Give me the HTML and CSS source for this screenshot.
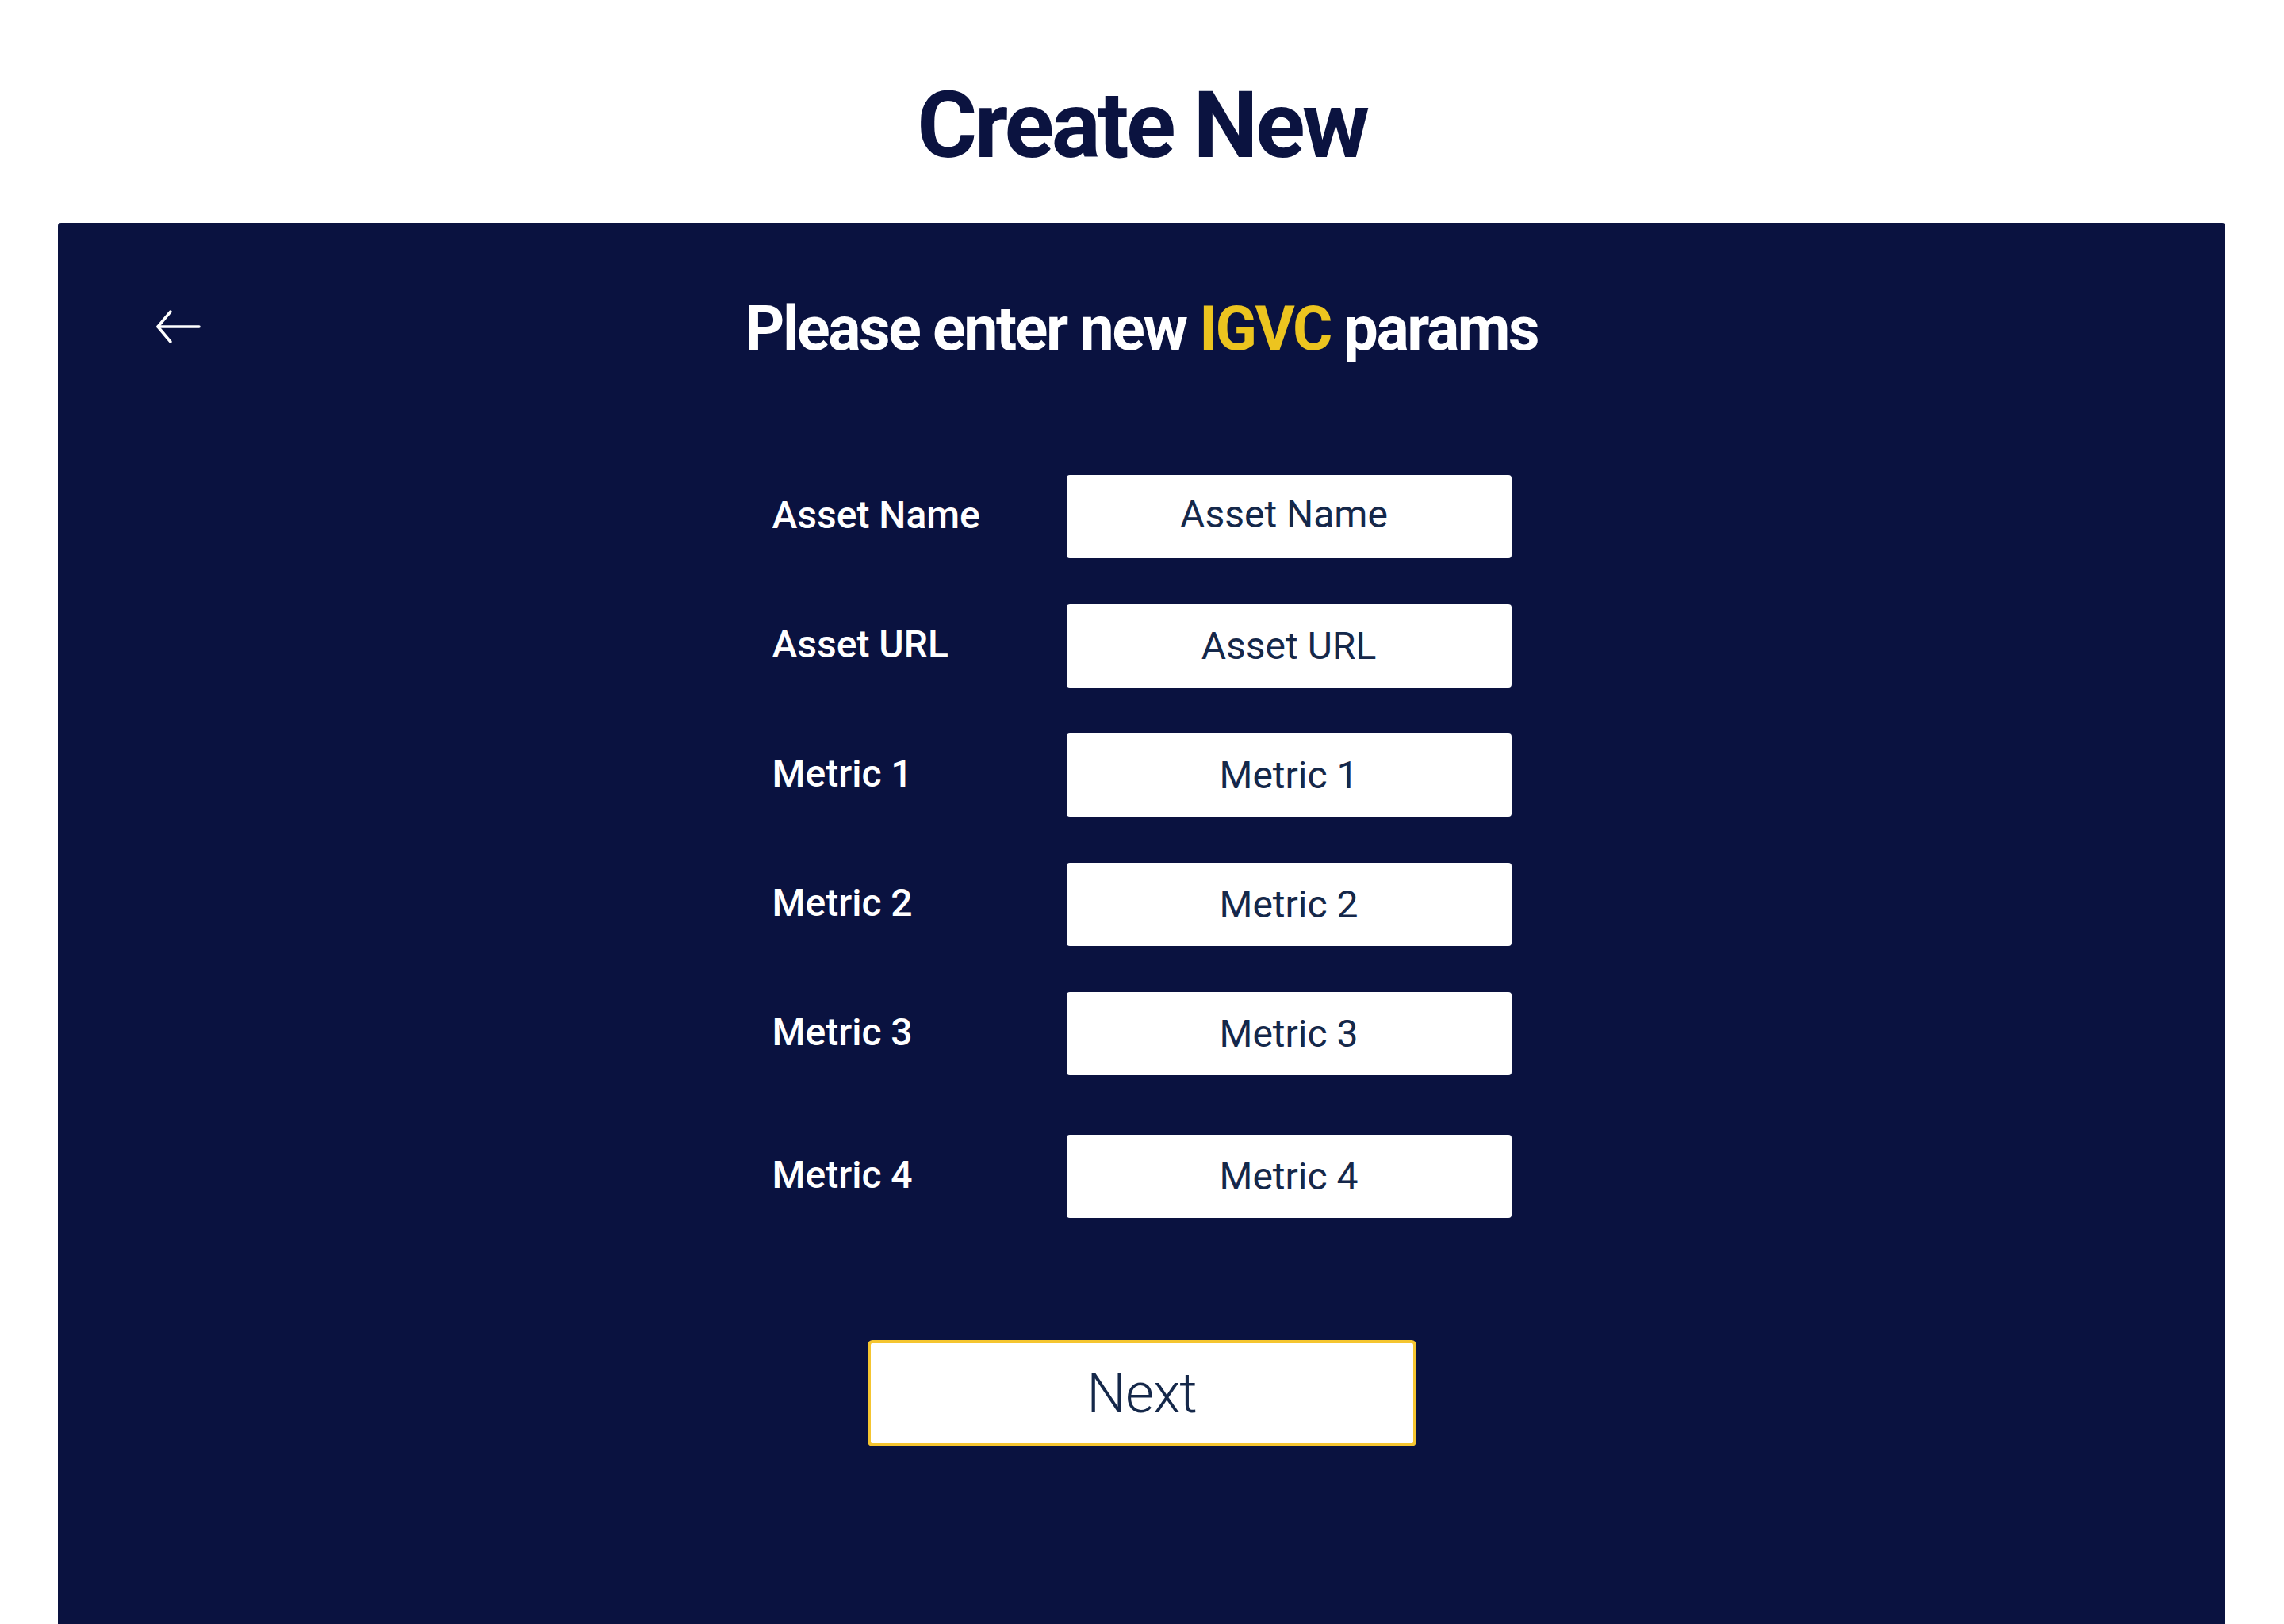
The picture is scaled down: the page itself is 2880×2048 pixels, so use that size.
FILE: index.html
```html
<!DOCTYPE html>
<html lang="en">
<head>
<meta charset="utf-8">
<title>Create New</title>
<link rel="stylesheet" href="styles.css">
</head>
<body>
<h1 class="page-title">Create New</h1>
<main class="panel">
  <header class="panel-head">
    <button class="back" type="button" aria-label="Back">
      <svg width="60" height="44" viewBox="0 0 60 44" fill="none" stroke="#ffffff" stroke-width="3.5" stroke-linecap="round" stroke-linejoin="round">
        <path d="M3 22 H55"/>
        <path d="M19 3 L3 22 L19 41"/>
      </svg>
    </button>
    <h2 class="panel-title">Please enter new <span class="accent">IGVC</span> params</h2>
  </header>
  <form class="form">
    <div class="row"><label class="label">Asset Name</label><input class="field field-shift" placeholder="Asset Name"></div>
    <div class="row"><label class="label">Asset URL</label><input class="field" placeholder="Asset URL"></div>
    <div class="row"><label class="label">Metric 1</label><input class="field" placeholder="Metric 1"></div>
    <div class="row"><label class="label">Metric 2</label><input class="field" placeholder="Metric 2"></div>
    <div class="row"><label class="label">Metric 3</label><input class="field" placeholder="Metric 3"></div>
    <div class="row row-last"><label class="label">Metric 4</label><input class="field" placeholder="Metric 4"></div>
    <div class="actions"><button class="next" type="button">Next</button></div>
  </form>
</main>
</body>
</html>
```
FILE: styles.css
```css
* { box-sizing: border-box; }
html, body { margin: 0; padding: 0; }
body {
  background: #ffffff;
  font-family: Roboto, "Liberation Sans", sans-serif;
  height: 2048px;
  overflow: hidden;
}
.page-title {
  margin: 0;
  padding-top: 88px;
  height: 281px;
  text-align: center;
  font-size: 116px;
  font-weight: 700;
  line-height: 140px;
  color: #0b1340;
  letter-spacing: -3.5px;
}
.panel {
  margin: 0 74px 0 73px;
  background: #0a1240;
  border-radius: 4px 4px 0 0;
  height: 1767px;
  padding-top: 82px;
}
.panel-head {
  position: relative;
  display: flex;
  justify-content: center;
  align-items: center;
  height: 105px;
}
.back {
  position: absolute;
  left: 123px;
  top: 27px;
  background: none;
  border: 0;
  padding: 0;
  display: block;
}
.back svg { display: block; }
.panel-title {
  margin: 0;
  font-size: 77px;
  font-weight: 700;
  color: #ffffff;
  line-height: 105px;
  letter-spacing: -2.4px;
}
.accent { color: #ecc41f; }
.form {
  width: 932px;
  margin: 131px auto 0;
  display: flex;
  flex-direction: column;
  gap: 58px;
}
.row {
  display: flex;
  align-items: center;
  height: 105px;
}
.row-last { margin-top: 17px; }
.label {
  width: 371px;
  color: #ffffff;
  font-size: 48px;
  font-weight: 500;
  margin-top: -4px;
}
.field {
  width: 561px;
  height: 105px;
  border: 0;
  border-radius: 4px;
  background: #ffffff;
  text-align: center;
  font-family: Roboto, "Liberation Sans", sans-serif;
  font-size: 48px;
  font-weight: 400;
  color: #15284a;
  outline: none;
  padding: 0;
}
.field-shift { padding-right: 12px; padding-bottom: 6px; }
.field::placeholder { color: #15284a; opacity: 1; }
.actions {
  display: flex;
  justify-content: center;
  margin-top: 96px;
}
.next {
  width: 692px;
  height: 134px;
  background: #ffffff;
  border: 4px solid #f5c530;
  border-radius: 6px;
  font-family: Roboto, "Liberation Sans", sans-serif;
  font-size: 70px;
  color: #15284a;
  font-weight: 300;
  letter-spacing: -1px;
  padding: 0 0 0 0;
}
```
